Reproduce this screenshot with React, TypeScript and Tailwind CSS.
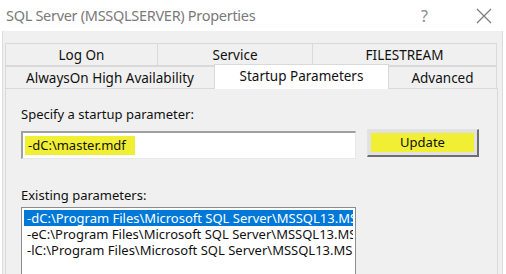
import React from "react";

const font = { fontFamily: '"Noto Sans", "Open Sans", sans-serif' };

function Tab({ label, w, selected }: { label: string; w: string; selected?: boolean }) {
  return (
    <div
      className={`${w} flex items-center justify-center border border-[#d9d9d9] -ml-px first:ml-0 ${
        selected ? "bg-white h-[25px] -mt-[2px] pb-[2px] border-b-0 relative z-10" : "h-[23px] bg-[#f0f0f0]"
      }`}
    >
      <span className="text-[13.5px] leading-[16px] text-[#111]">{label}</span>
    </div>
  );
}

const params = [
  "-dC:\\Program Files\\Microsoft SQL Server\\MSSQL13.MSSQLSERVER\\MSSQL\\DATA\\master.mdf",
  "-eC:\\Program Files\\Microsoft SQL Server\\MSSQL13.MSSQLSERVER\\MSSQL\\Log\\ERRORLOG",
  "-lC:\\Program Files\\Microsoft SQL Server\\MSSQL13.MSSQLSERVER\\MSSQL\\DATA\\mastlog.ldf",
];

export default function App() {
  return (
    <div className="w-[506px] h-[274px] overflow-hidden bg-white flex flex-col" style={font}>
      {/* Title bar */}
      <div className="h-[31px] shrink-0 flex items-center pl-[6px] pr-[14px] bg-white">
        <span className="text-[14.5px] tracking-[-0.3px] text-[#7a7a7a] flex-1 whitespace-nowrap">
          SQL Server (MSSQLSERVER) Properties
        </span>
        <span className="text-[16px] text-[#8a8a8a] mr-[48px]">?</span>
        <svg width="16" height="16" viewBox="0 0 16 16" className="text-[#7a7a7a]">
          <path d="M1 1 L15 15 M15 1 L1 15" stroke="currentColor" strokeWidth="1.2" />
        </svg>
      </div>

      {/* Dialog body */}
      <div className="flex-1 ml-[2px] mr-[3px] bg-[#f0f0f0] border-l border-r border-[#dcdcdc] pl-[2px] pr-[4px] pt-[12px] flex flex-col">
        <div className="flex">
          <Tab label="Log On" w="w-[153px]" />
          <Tab label="Service" w="w-[156px]" />
          <Tab label="FILESTREAM" w="w-[185px]" />
        </div>
        <div className="flex items-end">
          <Tab label="AlwaysOn High Availability" w="w-[210px]" />
          <Tab label="Startup Parameters" w="w-[175px]" selected />
          <Tab label="Advanced" w="w-[109px]" />
        </div>

        {/* Panel */}
        <div className="flex-1 -mt-px border border-[#d9d9d9] border-b-0 bg-[#f0f0f0] pl-[15px] pt-[16px]">
          <div className="text-[13px] leading-[18px] text-[#111]">Specify a startup parameter:</div>
          <div className="flex items-start mt-[8px] gap-[11px]">
            <div className="w-[335px] h-[28px] border-t-2 border-l-2 border-[#a0a0a0] border-b border-r border-b-[#e8e8e8] border-r-[#e8e8e8] bg-white flex items-center pl-[2px]">
              <span className="bg-[#f1ef33] text-[13px] leading-[19px] text-[#111] pl-[3px] w-[110px]">-dC:\master.mdf</span>
            </div>
            <div className="w-[112px] h-[28px] -mt-[2px] border border-t-[#e3e3e3] border-l-[#e3e3e3] border-b-2 border-r-2 border-b-[#6e6e6e] border-r-[#6e6e6e] bg-[#e1e1e1] p-[3px] flex">
              <div className="flex-1 bg-[#f1ef33] flex items-center justify-center text-[13px] text-[#111]">Update</div>
            </div>
          </div>
          <div className="text-[13px] leading-[18px] text-[#111] mt-[27px]">Existing parameters:</div>
          <div className="w-[335px] h-[80px] mt-[3px] border border-[#8c8c8c] bg-white p-[2px] overflow-hidden">
            {params.map((p, i) => (
              <div
                key={p}
                className={`h-[16px] leading-[16px] text-[13px] whitespace-nowrap pl-[3px] overflow-hidden ${
                  i === 0 ? "bg-[#0078d7] text-white" : "text-[#111]"
                }`}
              >
                {p}
              </div>
            ))}
          </div>
        </div>
      </div>
    </div>
  );
}
